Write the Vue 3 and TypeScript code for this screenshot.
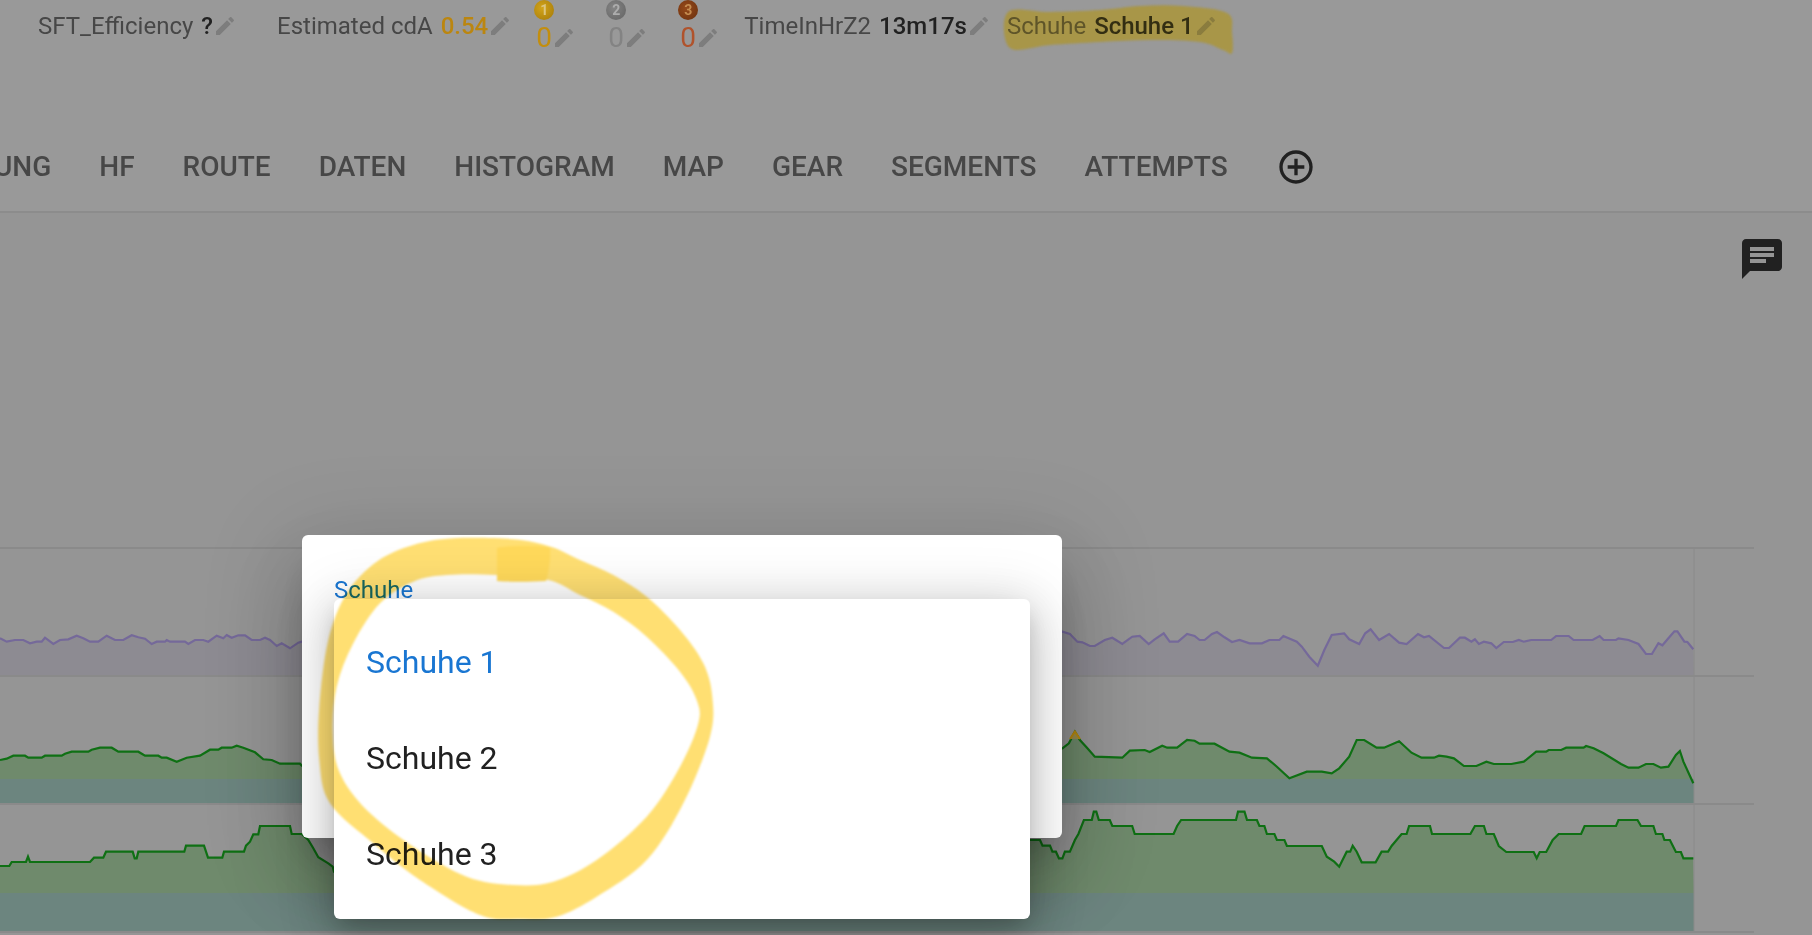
<script setup lang="ts">
type Pt = [number, number]

const left = (pts: number[][]): Pt[] => pts.map(([x, y]) => [x / 3, 600 + y / 3])
const right = (pts: number[][]): Pt[] => pts.map(([x, y]) => [1030 + x / 2.005, 530 + y / 3])

const purple: Pt[] = [
  ...left([[0,115],[20,125],[45,120],[70,120],[90,130],[110,125],[125,125],[135,113],[160,132],[180,120],[205,118],[230,107],[250,115],[270,125],[295,125],[320,107],[345,120],[370,120],[395,106],[415,112],[435,116],[455,132],[470,125],[495,125],[500,120],[510,125],[555,125],[565,132],[585,120],[610,120],[625,125],[650,107],[670,115],[680,105],[695,113],[715,106],[735,106],[755,120],[780,120],[795,113],[810,120],[830,138],[845,130],[870,145],[895,128],[905,125]]),
  ...right([[65,305],[80,312],[95,335],[105,337],[120,348],[130,348],[150,330],[165,323],[185,342],[205,320],[220,318],[238,342],[250,328],[268,310],[280,335],[297,335],[315,312],[330,318],[340,330],[350,330],[365,312],[375,306],[390,322],[405,336],[420,330],[440,340],[465,340],[480,330],[500,330],[508,318],[535,335],[545,350],[560,380],[577,407],[590,360],[605,315],[630,310],[640,328],[660,342],[672,310],[683,298],[700,330],[720,312],[740,338],[755,342],[778,312],[790,322],[800,318],[830,354],[840,354],[862,323],[872,323],[885,335],[892,328],[900,342],[910,335],[925,340],[935,354],[950,336],[968,336],[980,330],[990,335],[1005,330],[1045,330],[1055,318],[1080,318],[1090,330],[1128,330],[1142,318],[1150,330],[1175,330],[1180,325],[1200,330],[1220,342],[1235,372],[1247,372],[1260,340],[1268,346],[1280,325],[1292,304],[1298,304],[1312,335],[1318,336],[1330,358]])
]

const green1: Pt[] = [
  ...left([[0,480],[20,476],[40,467],[75,467],[85,473],[125,473],[135,467],[185,467],[195,461],[215,455],[265,455],[275,449],[300,443],[335,443],[355,455],[415,455],[435,467],[475,467],[485,473],[500,473],[530,485],[560,473],[600,467],[630,449],[655,449],[665,443],[695,443],[710,437],[730,443],[765,457],[790,478],[815,480],[840,491],[900,491],[905,497]]),
  ...right([[65,655],[78,640],[90,605],[100,630],[115,655],[130,680],[185,683],[200,662],[230,660],[240,666],[265,647],[275,653],[295,653],[315,630],[330,632],[340,641],[370,641],[400,665],[420,668],[445,683],[475,685],[495,710],[520,745],[555,725],[585,725],[605,730],[620,715],[640,680],[655,630],[670,630],[695,653],[710,653],[740,634],[765,668],[785,683],[810,683],[820,677],[835,680],[850,685],[870,708],[895,708],[915,695],[930,702],[965,702],[990,695],[1015,665],[1035,665],[1040,660],[1065,660],[1075,653],[1110,653],[1115,648],[1130,655],[1150,670],[1185,702],[1200,713],[1220,713],[1235,702],[1250,702],[1265,713],[1280,710],[1295,675],[1303,663],[1310,695],[1330,760]])
]

const green2: Pt[] = [
  ...left([[0,798],[28,798],[35,786],[78,786],[84,770],[90,786],[270,786],[282,773],[310,773],[318,755],[398,755],[404,775],[410,775],[415,755],[553,755],[558,737],[612,737],[624,773],[667,773],[672,755],[732,755],[738,737],[750,725],[760,703],[775,703],[780,678],[870,678],[875,702],[905,702],[925,720],[940,745],[955,772],[985,790],[998,800],[1002,815]]),
  ...right([[0,930],[20,930],[25,947],[40,947],[45,965],[52,965],[58,985],[65,985],[70,965],[80,965],[90,930],[97,912],[108,870],[124,870],[128,845],[133,845],[138,870],[160,870],[165,888],[205,888],[210,912],[288,912],[295,888],[303,870],[413,870],[417,845],[430,845],[435,870],[455,870],[460,888],[470,888],[475,912],[490,912],[495,930],[510,930],[515,948],[585,948],[595,980],[610,995],[620,1010],[635,965],[642,965],[647,947],[655,965],[665,997],[693,997],[705,965],[718,965],[725,948],[735,930],[745,912],[755,912],[760,888],[802,888],[806,912],[883,912],[892,888],[910,888],[915,912],[930,912],[940,948],[955,966],[1010,966],[1016,985],[1022,966],[1035,966],[1048,930],[1060,912],[1105,912],[1112,888],[1175,888],[1180,870],[1218,870],[1225,888],[1250,888],[1255,912],[1268,912],[1272,930],[1283,930],[1295,966],[1305,966],[1310,985],[1330,985]])
]

const line = (p: Pt[]) => 'M' + p.map(([x, y]) => `${x.toFixed(1)} ${y.toFixed(1)}`).join('L')
const area = (p: Pt[], bottom: number) => `${line(p)}L1694 ${bottom}L0 ${bottom}Z`

const smooth = (p: number[][]) => {
  const n = p.length
  let d = `M${p[0][0].toFixed(1)} ${p[0][1].toFixed(1)}`
  for (let i = 0; i < n; i++) {
    const a = p[(i - 1 + n) % n], b = p[i], c = p[(i + 1) % n], e = p[(i + 2) % n]
    const c1 = [b[0] + (c[0] - a[0]) / 6, b[1] + (c[1] - a[1]) / 6]
    const c2 = [c[0] - (e[0] - b[0]) / 6, c[1] - (e[1] - b[1]) / 6]
    d += `C${c1[0].toFixed(1)} ${c1[1].toFixed(1)} ${c2[0].toFixed(1)} ${c2[1].toFixed(1)} ${c[0].toFixed(1)} ${c[1].toFixed(1)}`
  }
  return d + 'Z'
}
const inDialog = (raw: number[][]) => raw.map(([x, y]) => [280 + x / 3, 520 + y / 3])

const ring =
  smooth(inDialog([[812,80],[700,58],[520,55],[400,75],[290,125],[200,220],[145,360],[118,560],[118,720],[150,850],[280,970],[420,1080],[600,1185],[720,1197],[830,1190],[950,1130],[1100,1020],[1210,850],[1290,650],[1297,530],[1270,430],[1200,330],[1100,230],[1000,165],[900,120]])) +
  smooth(inDialog([[805,180],[650,165],[500,165],[400,185],[300,250],[220,370],[170,500],[158,640],[180,760],[260,870],[400,980],[560,1070],[700,1095],[820,1085],[950,1020],[1100,890],[1200,740],[1255,610],[1250,540],[1200,455],[1100,350],[1000,275],[900,225]]))

const swipe = smooth([[1008,12],[1050,12],[1100,10],[1140,6],[1183,6],[1227,13],[1232,33],[1232,53],[1223,50],[1200,42],[1150,40],[1100,42],[1050,45],[1010,48]])

const edit = 'M3 17.25V21h3.75L17.81 9.94l-3.75-3.75L3 17.25zM20.71 7.04c.39-.39.39-1.02 0-1.41l-2.34-2.34c-.39-.39-1.02-.39-1.41 0l-1.83 1.83 3.75 3.75 1.83-1.83z'
const tabs = ['UNG', 'HF', 'ROUTE', 'DATEN', 'HISTOGRAM', 'MAP', 'GEAR', 'SEGMENTS', 'ATTEMPTS']
const medals = [
  { n: 1, cls: 'gold' },
  { n: 2, cls: 'silver' },
  { n: 3, cls: 'bronze' }
]
const options = ['Schuhe 1', 'Schuhe 2', 'Schuhe 3']
</script>

<template>
  <div class="page">
    <svg class="swipe" viewBox="0 0 1812 60" width="1812" height="60">
      <path fill="#a89648" :d="swipe" />
    </svg>
    <header class="head">
      <div class="stats">
        <div class="stat first">
          <span class="label">SFT_Efficiency</span><b class="val">?</b>
          <svg class="pen" viewBox="0 0 24 24"><path :d="edit" /></svg>
        </div>
        <div class="stat">
          <span class="label">Estimated cdA</span><span class="val amber">0.54</span>
          <svg class="pen" viewBox="0 0 24 24"><path :d="edit" /></svg>
        </div>
        <div v-for="m in medals" :key="m.n" class="medal-stat" :class="m.cls">
          <span class="medal">{{ m.n }}</span>
          <div class="medal-val">
            <span>0</span>
            <svg class="pen" viewBox="0 0 24 24"><path :d="edit" /></svg>
          </div>
        </div>
        <div class="stat after-medal">
          <span class="label">TimeInHrZ2</span><b class="val">13m17s</b>
          <svg class="pen" viewBox="0 0 24 24"><path :d="edit" /></svg>
        </div>
        <div class="stat shoe">
          <span class="label">Schuhe</span><b class="val">Schuhe 1</b>
          <svg class="pen" viewBox="0 0 24 24"><path :d="edit" /></svg>
        </div>
      </div>
      <nav class="tabs">
        <span v-for="t in tabs" :key="t" class="tab">{{ t }}</span>
        <svg class="add" viewBox="0 0 24 24">
          <path d="M13 7h-2v4H7v2h4v4h2v-4h4v-2h-4V7zm-1-5C6.48 2 2 6.48 2 12s4.48 10 10 10 10-4.48 10-10S17.52 2 12 2zm0 18c-4.41 0-8-3.59-8-8s3.59-8 8-8 8 3.59 8 8-3.59 8-8 8z" />
        </svg>
      </nav>
    </header>

    <main class="charts">
      <svg class="plot" viewBox="0 213 1812 722" width="1812" height="722">
        <path :d="area(purple, 676)" fill="#8d8b92" />
        <path :d="area(green1, 779)" fill="#6f8a6c" />
        <rect x="0" y="779" width="1694" height="25" fill="#6c857f" />
        <path :d="area(green2, 893)" fill="#6f8a6c" />
        <rect x="0" y="893" width="1694" height="39" fill="#6c857f" />
        <g stroke="#8a8a8a" stroke-width="2">
          <line x1="0" y1="548" x2="1754" y2="548" />
          <line x1="0" y1="676" x2="1754" y2="676" />
          <line x1="0" y1="804" x2="1754" y2="804" />
          <line x1="0" y1="932" x2="1754" y2="932" />
        </g>
        <line x1="1694" y1="548" x2="1694" y2="932" stroke="#8a8a8a" stroke-width="1" />
        <path :d="line(purple)" fill="none" stroke="#75699a" stroke-width="2.2" />
        <path :d="line(green1)" fill="none" stroke="#0f7014" stroke-width="2.2" />
        <path :d="line(green2)" fill="none" stroke="#0f7014" stroke-width="2.2" />
        <path d="M1070 739L1074.900 731.600L1080 739" fill="#9a8c4c" stroke="#b8880f" stroke-width="2" />
      </svg>
      <svg class="comment" viewBox="0 0 24 24">
        <path d="M20 2H4c-1.100 0-1.990.9-1.990 2L2 22l4-4h14c1.100 0 2-.9 2-2V4c0-1.100-.9-2-2-2zM6 9h12v2H6V9zm8 5H6v-2h8v2zm4-6H6V6h12v2z" />
      </svg>
    </main>

    <section class="dialog">
      <label class="field">Schuhe</label>
      <ul class="menu">
        <li v-for="(o, i) in options" :key="o" :class="{ active: i === 0 }">{{ o }}</li>
      </ul>
    </section>

    <svg class="marker" viewBox="0 0 1812 935" width="1812" height="935">
      <g class="ink">
        <path fill="#ffdf72" fill-rule="evenodd" :d="ring" />
        <path fill="#ffd95a" d="M497 548C510 545 540 545 550 548C551 560 548 575 546 581C530 582 510 582 497 581Z" />
      </g>
    </svg>
  </div>
</template>

<style>
html, body { margin: 0; background: #959595; overflow: hidden; }
</style>

<style scoped>
.page {
  position: relative;
  width: 1812px;
  height: 935px;
  overflow: hidden;
  background: #959595;
  font-family: Roboto, "Liberation Sans", sans-serif;
}
.swipe {
  position: absolute;
  left: 0;
  top: 0;
  z-index: 1;
  filter: blur(0.8px);
}
.head {
  box-sizing: border-box;
  height: 213px;
  background: #999;
  border-bottom: 2px solid #8c8c8c;
}
.stats {
  position: relative;
  z-index: 2;
  display: flex;
  align-items: center;
  height: 52px;
  padding-left: 38px;
}
.stat {
  display: flex;
  align-items: center;
  margin-left: 40px;
  font-size: 24px;
  line-height: 32px;
}
.stat.first { margin-left: 0; }
.stat.after-medal { margin-left: 28px; }
.stat.shoe { margin-left: 16px; }
.label { color: #474747; margin-right: 8px; }
.val { color: #212121; font-weight: 500; }
b.val { font-weight: 500; }
.amber { color: #bb8610; font-weight: 500; }
.shoe .label { color: #5f5529; }
.shoe .val { color: #332e12; }
.shoe .pen { fill: #8a7c3e; }
.pen {
  width: 24px;
  height: 24px;
  fill: #7d7d7d;
  flex: none;
}
.medal-stat {
  display: flex;
  flex-direction: column;
  align-items: flex-start;
  width: 36px;
  height: 52px;
  margin-left: 36px;
}
.stat + .medal-stat { margin-left: 24px; }
.medal {
  width: 20px;
  height: 20px;
  margin-left: -2px;
  border-radius: 50%;
  display: flex;
  align-items: center;
  justify-content: center;
  font-size: 14px;
  font-weight: 700;
  line-height: 20px;
}
.medal-val {
  display: flex;
  align-items: center;
  height: 32px;
  margin-top: 2px;
  font-size: 28px;
  line-height: 32px;
}
.gold .medal { background: radial-gradient(circle at 40% 40%, #d2a41a, #a37808); color: #dcc682; }
.gold .medal-val { color: #c38e0e; }
.silver .medal { background: radial-gradient(circle at 40% 40%, #858585, #626262); color: #adadad; }
.silver .medal-val { color: #838383; }
.bronze .medal { background: radial-gradient(circle at 40% 40%, #95491a, #6a300e); color: #c48c50; }
.bronze .medal-val { color: #b0532c; }
.tabs {
  display: flex;
  align-items: center;
  gap: 48px;
  height: 90px;
  margin: 70px 0 0 -6px;
}
.tab {
  padding-bottom: 2px;
  color: #474747;
  font-size: 28px;
  font-weight: 500;
  white-space: nowrap;
}
.add {
  width: 40px;
  height: 40px;
  fill: #212121;
  flex: none;
}
.charts {
  position: relative;
  height: 722px;
}
.plot { display: block; }
.comment {
  position: absolute;
  top: 22px;
  right: 26px;
  width: 48px;
  height: 48px;
  fill: #212121;
}
.dialog {
  position: absolute;
  left: 302px;
  top: 535px;
  width: 760px;
  height: 303px;
  background: #fff;
  border-radius: 6px;
  box-shadow: 0 22px 30px -14px rgba(0,0,0,.2), 0 48px 76px 6px rgba(0,0,0,.14), 0 18px 92px 16px rgba(0,0,0,.12);
}
.field {
  position: absolute;
  left: 32px;
  top: 39px;
  color: #1976d2;
  font-size: 24px;
  line-height: 32px;
}
.menu {
  position: absolute;
  left: 32px;
  top: 64px;
  box-sizing: border-box;
  width: 696px;
  height: 320px;
  margin: 0;
  padding: 16px 0;
  list-style: none;
  background: #fff;
  border-radius: 6px;
  box-shadow: 0 10px 20px -6px rgba(0,0,0,.2), 0 16px 48px 4px rgba(0,0,0,.14), 0 6px 56px 8px rgba(0,0,0,.12);
}
.menu li {
  display: flex;
  align-items: center;
  box-sizing: border-box;
  height: 96px;
  padding: 0 0 2px 32px;
  color: #212121;
  font-size: 32px;
}
.menu li.active { color: #1976d2; }
.marker {
  position: absolute;
  left: 0;
  top: 0;
  pointer-events: none;
  mix-blend-mode: multiply;
}
.ink { filter: blur(1px); }
</style>
